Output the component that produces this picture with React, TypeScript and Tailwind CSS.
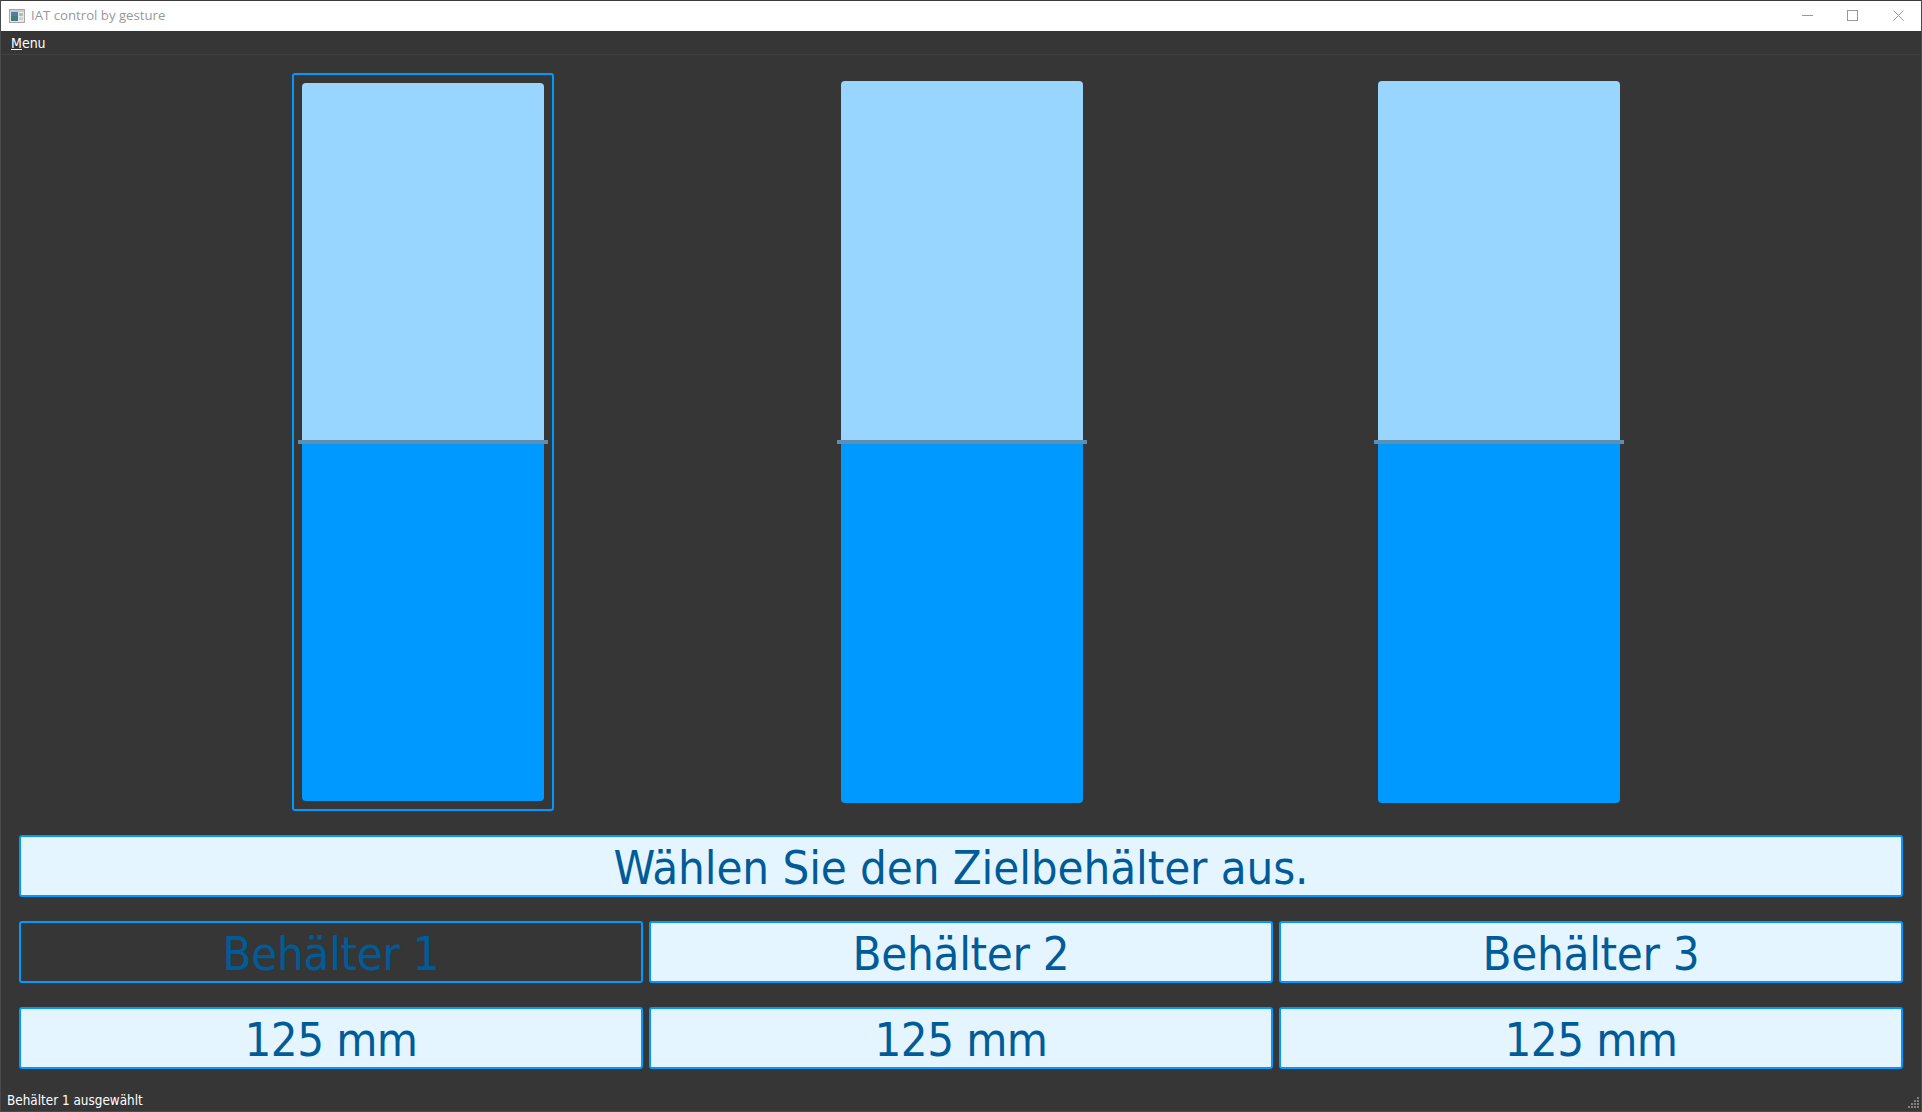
import React from 'react';

const FONT = "font-['DejaVu_Sans'] [font-stretch:condensed]";

const Tank: React.FC<{ selected?: boolean; className?: string }> = ({ selected, className = '' }) => (
  <div
    className={`relative flex h-[738px] w-[262px] items-center justify-center rounded-[3px] border-2 ${
      selected ? 'border-[#0099ff]' : 'border-transparent'
    } ${className}`}
  >
    <div className={`flex w-[242px] flex-col overflow-hidden rounded-[4px] ${selected ? 'h-[718px]' : 'h-[722px]'}`}>
      <div className="flex-1 bg-[#99d6ff]" />
      <div className={`bg-[#0099ff] ${selected ? 'h-[358px]' : 'h-[360px]'}`} />
    </div>
    <div className="absolute left-[4px] top-[365px] h-1 w-[250px] bg-[#5c8fb3]" />
  </div>
);

const Box: React.FC<{ children: React.ReactNode; active?: boolean }> = ({ children, active }) => (
  <div
    className={`flex h-[62px] items-center justify-center rounded-[3px] border-2 border-[#0099ff] pt-[2px] text-[47px] leading-none text-[#005c99] ${
      active ? 'bg-[#363636]' : 'bg-[#e5f5ff]'
    }`}
  >
    {children}
  </div>
);

export default function App() {
  return (
    <div className={`flex h-[1112px] w-[1922px] flex-col overflow-hidden border-x border-b border-[#4a4a4a] bg-[#363636] ${FONT}`}>
      <div className="h-px shrink-0 bg-[#3a3a3a]" />
      <div className="flex h-[30px] shrink-0 items-center bg-white">
        <svg className="ml-[8px] mr-[6px]" width="16" height="14" viewBox="0 0 16 14">
          <rect x="0.5" y="0.5" width="15" height="13" fill="#e8e8e8" stroke="#a8a8a8" />
          <rect x="1" y="1" width="14" height="2" fill="#cccccc" />
          <rect x="2" y="3" width="7" height="9" fill="#3f7f7a" />
          <rect x="2" y="3" width="7" height="4" fill="#4f7fa8" />
          <rect x="10" y="4" width="4" height="3" fill="#a8c8a8" />
          <rect x="10" y="8" width="4" height="3" fill="#d0d0d0" />
        </svg>
        <span className="font-['Open_Sans'] text-[13.2px] text-[#999999] [font-stretch:normal]">IAT control by gesture</span>
        <div className="ml-auto flex items-center">
          <svg width="11" height="11" viewBox="0 0 11 11" className="mr-[34px] -translate-y-px">
            <path d="M0 5.5H11" stroke="#999" />
          </svg>
          <svg width="11" height="11" viewBox="0 0 11 11" className="mr-[35px] -translate-y-px">
            <rect x="0.5" y="0.5" width="10" height="10" fill="none" stroke="#999" />
          </svg>
          <svg width="11" height="11" viewBox="0 0 11 11" className="mr-[17px] -translate-y-px">
            <path d="M0.5 0.5L10.5 10.5M10.5 0.5L0.5 10.5" stroke="#999" />
          </svg>
        </div>
      </div>
      <div className="h-[24px] shrink-0 border-b border-[#404040] pl-[10px] pt-[4px] text-[14px] leading-[16px] text-white">
        <span className="underline">M</span>enu
      </div>
      <div className="flex flex-1 flex-col px-[18px]">
        <div className="ml-[273px] mt-[18px] flex">
          <Tank selected className="mr-[277px]" />
          <Tank className="mr-[275px]" />
          <Tank />
        </div>
        <div className="mt-[24px] tracking-[-0.1px]">
          <Box>Wählen Sie den Zielbehälter aus.</Box>
        </div>
        <div className="mt-[24px] grid grid-cols-3 gap-[6px] tracking-[-0.3px]">
          <Box active>Behälter 1</Box>
          <Box>Behälter 2</Box>
          <Box>Behälter 3</Box>
        </div>
        <div className="mt-[24px] grid grid-cols-3 gap-[6px] tracking-[-0.6px]">
          <Box>125 mm</Box>
          <Box>125 mm</Box>
          <Box>125 mm</Box>
        </div>
      </div>
      <div className="relative h-[22px] shrink-0 pl-[6px] pt-[4px] text-[13.4px] leading-[16px] text-white">
        Behälter 1 ausgewählt
        <svg className="absolute bottom-[2px] right-[2px]" width="12" height="12" viewBox="0 0 12 12" fill="#808080">
          <rect x="10" y="0" width="2" height="2" />
          <rect x="7" y="3" width="2" height="2" />
          <rect x="10" y="3" width="2" height="2" />
          <rect x="4" y="6" width="2" height="2" />
          <rect x="7" y="6" width="2" height="2" />
          <rect x="10" y="6" width="2" height="2" />
          <rect x="1" y="9" width="2" height="2" />
          <rect x="4" y="9" width="2" height="2" />
          <rect x="7" y="9" width="2" height="2" />
          <rect x="10" y="9" width="2" height="2" />
        </svg>
      </div>
    </div>
  );
}
